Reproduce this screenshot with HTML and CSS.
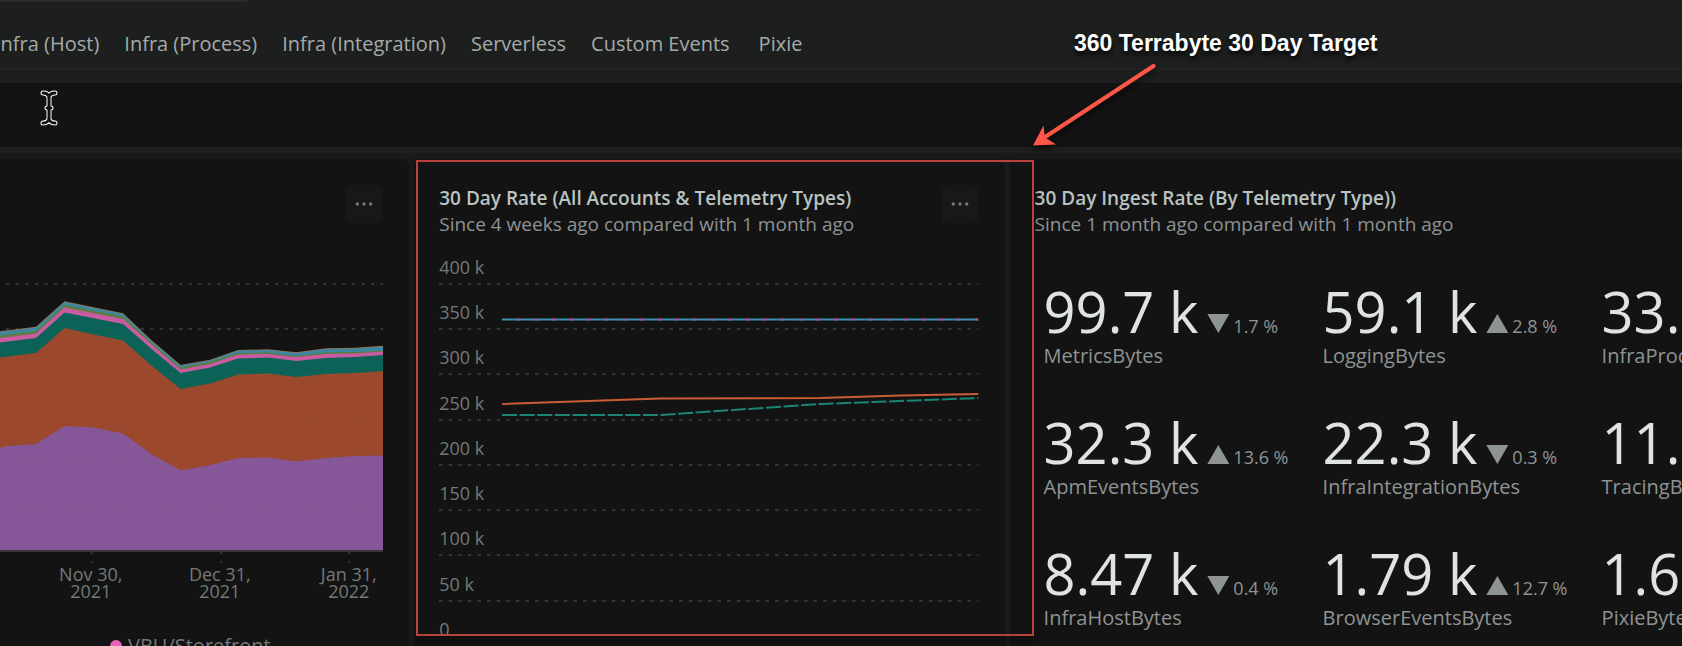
FILE: index.html
```html
<!DOCTYPE html>
<html lang="en">
<head>
<meta charset="utf-8">
<meta name="viewport" content="width=device-width, initial-scale=1">
<title>Telemetry ingest</title>
<link rel="stylesheet" href="styles.css">
</head>
<body>
<header class="header">
  <nav class="tabs" aria-label="Telemetry types">
    <button class="tab" type="button">Infra (Host)</button>
    <button class="tab" type="button">Infra (Process)</button>
    <button class="tab" type="button">Infra (Integration)</button>
    <button class="tab" type="button">Serverless</button>
    <button class="tab" type="button">Custom Events</button>
    <button class="tab" type="button">Pixie</button>
  </nav>
</header>
<div class="filter-bar"></div>

<main class="board">
  <section class="card card-area">
    <div class="card-head card-head-end">
      <button class="more" type="button" aria-label="More options"><svg width="18" height="4" viewBox="0 0 18 4"><circle cx="2.300" cy="2" r="1.700"/><circle cx="9" cy="2" r="1.700"/><circle cx="15.700" cy="2" r="1.700"/></svg></button>
    </div>
    <svg class="plot plot-area" viewBox="0 240 383 324" preserveAspectRatio="none" aria-hidden="true">
      <g class="grid-line"><path d="M6 285H383M6 330H383"/></g>
      <path fill="#a5704a" d="M0 332.300 36 327.800 64.500 302.300 123 314.300 152 341.800 180.500 366 210 360.800 238 351 268 350.300 296 353.300 326 349.300 355 348.800 383 346.800V551H0Z"/>
      <path fill="#3b88a3" d="M0 333 36 328.500 64.500 303 123 315 152 342.500 180.500 366.500 210 361.500 238 351.500 268 351 296 354 326 350 355 349.500 383 347.500V551H0Z"/>
      <path fill="#5f7c40" d="M0 336.500 36 332 64.500 306 123 317.500 152 344 180.500 368.500 210 363 238 354 268 353.500 296 357 326 353.500 355 353 383 351.500V551H0Z"/>
      <path fill="#c95ba3" d="M0 339 36 334.500 64.500 308.500 123 320 152 346 180.500 370.500 210 365 238 355.500 268 355 296 358 326 355 355 354.500 383 352.500V551H0Z"/>
      <path fill="#0b6256" d="M0 343.500 36 339 64.500 313.500 123 325 152 350.500 180.500 374 210 368.500 238 359.500 268 358.500 296 362 326 359 355 358 383 356V551H0Z"/>
      <path fill="#9b482c" d="M0 358.500 36 354 64.500 329 96 336 123 341.500 152 367 180.500 390 210 384.500 238 375.500 268 374.500 296 378 326 375 355 374 383 372V551H0Z"/>
      <path fill="#865798" d="M0 449 4 447.500 36 445 64.500 427 94 428.500 123 434.500 152 455.500 180.500 471.500 210 466 238 459 268 458.500 296 462.500 326 459 355 457 383 456.500V551H0Z"/>
      <g class="grid-line grid-faint"><path d="M6 375H383M6 418H383M6 463H383M6 508H383"/></g>
      <path stroke="#3a353c" stroke-width="2" d="M0 552H383"/>
      <path stroke="#353737" stroke-width="2" d="M91.500 553V555M91.500 562V564M221 553V555M221 562V564M349 553V555M349 562V564"/>
    </svg>
    <div class="dates">
      <span>Nov 30,<br>2021</span>
      <span>Dec 31,<br>2021</span>
      <span>Jan 31,<br>2022</span>
    </div>
    <div class="legend"><i class="dot"></i>VBU/Storefront</div>
  </section>

  <section class="card card-line">
    <div class="card-head">
      <div>
        <h2 class="title">30 Day Rate (All Accounts &amp; Telemetry Types)</h2>
        <p class="sub">Since 4 weeks ago compared with 1 month ago</p>
      </div>
      <button class="more" type="button" aria-label="More options"><svg width="18" height="4" viewBox="0 0 18 4"><circle cx="2.300" cy="2" r="1.700"/><circle cx="9" cy="2" r="1.700"/><circle cx="15.700" cy="2" r="1.700"/></svg></button>
    </div>
    <div class="line-chart">
      <div class="ticks">
        <span>400 k</span><span>350 k</span><span>300 k</span><span>250 k</span><span>200 k</span><span>150 k</span><span>100 k</span><span>50 k</span><span>0</span>
      </div>
      <svg class="plot plot-line" viewBox="439 240 539 406" preserveAspectRatio="none" aria-hidden="true">
        <g class="grid-line"><path d="M439 285H978M439 330H978M439 375H978M439 421H978M439 466H978M439 511H978M439 556H978M439 602H978"/></g>
        <g fill="none" stroke-width="2">
          <path stroke="#3f8fb0" d="M502 320.500H978"/>
          <path stroke="#c8468f" stroke-dasharray="3 14.600" d="M517 320.500H978"/>
          <path stroke="#cb5c36" d="M502 405 660 399.500 820 399 900 396.500 978 395"/>
          <path stroke="#1c8674" stroke-dasharray="15 2.600" d="M502 416H660L820 405 978 399"/>
        </g>
      </svg>
    </div>
  </section>

  <section class="card card-kpi">
    <h2 class="title">30 Day Ingest Rate (By Telemetry Type))</h2>
    <p class="sub">Since 1 month ago compared with 1 month ago</p>
    <div class="kpis">
      <div class="kpi"><div class="value">99.7 k<i class="down"></i><small>1.7 %</small></div><div class="name">MetricsBytes</div></div>
      <div class="kpi"><div class="value">59.1 k<i class="up"></i><small>2.8 %</small></div><div class="name">LoggingBytes</div></div>
      <div class="kpi"><div class="value">33.</div><div class="name">InfraProcessBytes</div></div>
      <div class="kpi"><div class="value">32.3 k<i class="up"></i><small>13.6 %</small></div><div class="name">ApmEventsBytes</div></div>
      <div class="kpi"><div class="value">22.3 k<i class="down"></i><small>0.3 %</small></div><div class="name">InfraIntegrationBytes</div></div>
      <div class="kpi"><div class="value">11.</div><div class="name">TracingBytes</div></div>
      <div class="kpi"><div class="value">8.47 k<i class="down"></i><small>0.4 %</small></div><div class="name">InfraHostBytes</div></div>
      <div class="kpi"><div class="value">1.79 k<i class="up"></i><small>12.7 %</small></div><div class="name">BrowserEventsBytes</div></div>
      <div class="kpi"><div class="value">1.6</div><div class="name">PixieBytes</div></div>
    </div>
  </section>
</main>

<div class="highlight"></div>
<div class="callout">360 Terrabyte 30 Day Target</div>
<svg class="arrow" width="140" height="100" viewBox="1025 55 140 100" aria-hidden="true">
  <path d="M1153.500 66 1042 139" stroke="#ff5648" stroke-width="4" stroke-linecap="round"/>
  <path d="M1033 145.500 1043.500 125.500 1045 137.500 1056 144.500Z" fill="#ff5648"/>
</svg>
<svg class="cursor" width="20" height="38" viewBox="0 0 20 38" fill="none" stroke-linecap="round" stroke-linejoin="round" aria-hidden="true">
  <path stroke="#fff" stroke-width="5" d="M4 4Q9 4 10 8Q11 4 16 4M10 8V31M4 34Q9 34 10 30Q11 34 16 34M8 19H12"/>
  <path stroke="#111" stroke-width="3" d="M4 4Q9 4 10 8Q11 4 16 4M10 8V31M4 34Q9 34 10 30Q11 34 16 34M8 19H12"/>
</svg>
</body>
</html>
```
FILE: styles.css
```css
* { box-sizing: border-box; }
body {
  position: relative;
  display: flex;
  flex-direction: column;
  height: 100vh;
  margin: 0;
  overflow: hidden;
  background: #191a1a;
  color: #8e9494;
  font-family: "Open Sans", "Noto Sans", sans-serif;
  font-size: 20px;
}
h2, p { margin: 0; }
button { border: 0; padding: 0; font: inherit; cursor: pointer; }

.header {
  flex: none;
  height: 83px;
  padding-top: 31px;
  background:
    linear-gradient(#2a2c2b, #2a2c2b) 0 0 / 247px 2px no-repeat,
    linear-gradient(#212423, #212423) 0 68px / 100% 2px no-repeat,
    #1d1f1e;
}
.tabs { display: flex; gap: 25px; margin-left: -5px; }
.tab { background: none; color: #a4aaa9; line-height: 26px; white-space: nowrap; }
.tab:last-child { margin-left: 4px; }
.filter-bar { flex: none; height: 70px; background: #131313; border-bottom: 6px solid #1d1f1e; }

.board {
  flex: 1;
  min-height: 0;
  display: grid;
  grid-template-columns: minmax(0, 409fr) minmax(0, 590fr) minmax(0, 672fr);
  column-gap: 5px;
  padding-top: 6px;
}
.card { min-width: 0; padding: 26px 26px 0 25px; background: #131313; border-radius: 8px 8px 0 0; overflow: hidden; }
.card-area { padding-left: 0; border-top-left-radius: 0; }
.card-kpi { padding-right: 0; border-top-right-radius: 0; }
.card-head { display: flex; justify-content: space-between; height: 54px; }
.card-head-end { justify-content: flex-end; }
.title { color: #b9c3c2; font-size: 19px; font-weight: 600; line-height: 26px; white-space: nowrap; }
.sub { font-size: 19px; line-height: 26px; white-space: nowrap; }
.more { flex: none; display: grid; place-items: center; width: 38px; height: 38px; border-radius: 6px; background: #171918; }
.more svg { fill: #747878; }

.plot { display: block; width: 100%; }
.plot-area { height: 324px; }
.grid-line { fill: none; stroke: #323434; stroke-width: 2; stroke-dasharray: 3.5 6.1; }
.grid-faint { opacity: 0.03; stroke: #fff; }
.dates { display: flex; justify-content: flex-end; margin: 3px -30px 0 0; color: #747978; font-size: 18px; line-height: 17px; text-align: center; }
.dates span { width: 129px; }
.legend { display: flex; align-items: center; gap: 6px; margin: 33px 0 0 110px; color: #747978; line-height: 26px; }
.dot { width: 12px; height: 12px; border-radius: 50%; background: #e863b6; }

.line-chart { display: grid; height: 406px; }
.line-chart > * { grid-area: 1 / 1; }
.ticks { display: grid; grid-template-rows: repeat(9, 1fr); height: 413px; padding-top: 6px; color: #747978; font-size: 18px; line-height: 45px; }
.plot-line { height: 406px; }

.kpis { display: grid; grid-template-columns: repeat(3, 279px); grid-auto-rows: 131px; margin: 42px 0 0 9px; }
.value { display: flex; align-items: baseline; color: #dfe3e3; font-size: 56px; line-height: 64px; white-space: nowrap; }
.value i { width: 22px; height: 19px; margin: 0 4px 0 9px; background: #8e9494; }
.up { clip-path: polygon(50% 0, 100% 100%, 0 100%); }
.down { clip-path: polygon(0 0, 100% 0, 50% 100%); }
.value small { color: #8e9494; font-size: 18px; line-height: 20px; }
.name { line-height: 26px; white-space: nowrap; }

.highlight { position: absolute; left: 416px; top: 160px; width: 618px; height: 476px; border: 2px solid #b8423c; box-shadow: 0 3px 8px rgba(0, 0, 0, 0.3); }
.callout { position: absolute; left: 1074px; top: 29px; color: #fff; font: bold 23px/28px "Liberation Sans", Arial, sans-serif; white-space: nowrap; text-shadow: 0 4px 4px rgba(0, 0, 0, 0.8); }
.arrow { position: absolute; left: 1025px; top: 55px; filter: drop-shadow(0 4px 3px rgba(0, 0, 0, 0.6)); }
.cursor { position: absolute; left: 39px; top: 89px; }
```
